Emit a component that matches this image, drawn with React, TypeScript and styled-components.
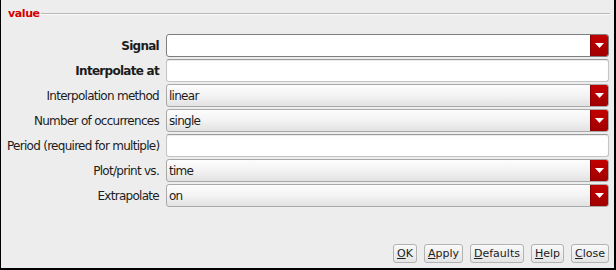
import React from 'react'
import styled, { createGlobalStyle } from 'styled-components'

const GlobalStyle = createGlobalStyle`
  html, body {
    margin: 0;
    padding: 0;
    background: #ededed;
  }
  body {
    font-family: "DejaVu Sans", sans-serif;
    font-size: 12px;
    letter-spacing: -0.72px;
    color: #1c1c1c;
  }
`

const Window = styled.div`
  width: 616px;
  height: 270px;
  box-sizing: border-box;
  border: 1px solid #000;
  border-top: none;
  border-right-width: 2px;
  border-bottom-width: 2px;
  background: #ededed;
  display: flex;
  flex-direction: column;
`

const Frame = styled.div`
  padding: 6px 4px 0 6px;
  flex: 1;
`

const LegendRow = styled.div`
  display: flex;
  align-items: center;
  gap: 1px;
  height: 14px;
`

const Legend = styled.span`
  color: #d40000;
  font-weight: bold;
  font-size: 11px;
  letter-spacing: -0.4px;
  padding-left: 1px;
`

const LegendLine = styled.div`
  flex: 1;
  height: 1px;
  margin-top: 1px;
  background: #b8b8b8;
  border-bottom: 1px solid #fafafa;
`

const Form = styled.div`
  display: grid;
  grid-template-columns: 152px 1fr;
  column-gap: 7px;
  row-gap: 2px;
  margin-top: 14px;
  padding-right: 1px;
`

const Label = styled.label<{ $bold?: boolean }>`
  text-align: right;
  align-self: center;
  font-weight: ${p => (p.$bold ? 'bold' : 'normal')};
  white-space: nowrap;
`

const TextField = styled.div`
  height: 23px;
  box-sizing: border-box;
  background: #fff;
  border: 1px solid #c4c4c4;
  border-top-color: #9a9a9a;
  border-radius: 3px;
  box-shadow: inset 0 1px 1px rgba(0, 0, 0, 0.08);
`

const Combo = styled.div<{ $outlined?: boolean }>`
  height: 23px;
  box-sizing: border-box;
  display: flex;
  align-items: stretch;
  border: 1px solid ${p => (p.$outlined ? '#7d7d7d' : '#a9a9a9')};
  border-radius: 3px;
  background: ${p =>
    p.$outlined ? '#fff' : 'linear-gradient(#fdfdfd, #f3f3f3 50%, #e2e2e2)'};
  overflow: hidden;
`

const ComboText = styled.span`
  flex: 1;
  display: flex;
  align-items: center;
  padding-left: 2px;
`

const Arrow = styled.span`
  width: 17px;
  display: flex;
  align-items: center;
  justify-content: center;
  background: linear-gradient(#c40000, #a00000);
  border-left: 1px solid #8a0000;
`

const ButtonBar = styled.div`
  display: flex;
  justify-content: flex-end;
  gap: 7px;
  padding: 0 5px 5px 0;
`

const Button = styled.button`
  font-family: inherit;
  font-size: 11px;
  letter-spacing: 0;
  color: #1c1c1c;
  height: 19px;
  padding: 0 3px;
  border: 1px solid #b3b3b3;
  border-radius: 3px;
  background: linear-gradient(#f9f9f9, #e4e4e4);
  u {
    text-decoration: underline;
  }
`

const DownArrow = () => (
  <svg width="9" height="5" viewBox="0 0 9 5">
    <path d="M0 0h9L4.5 5z" fill="#fff" />
  </svg>
)

type Row = {
  label: string
  bold?: boolean
  kind: 'text' | 'combo'
  value?: string
  outlined?: boolean
}

const rows: Row[] = [
  { label: 'Signal', bold: true, kind: 'combo', value: '', outlined: true },
  { label: 'Interpolate at', bold: true, kind: 'text' },
  { label: 'Interpolation method', kind: 'combo', value: 'linear' },
  { label: 'Number of occurrences', kind: 'combo', value: 'single' },
  { label: 'Period (required for multiple)', kind: 'text' },
  { label: 'Plot/print vs.', kind: 'combo', value: 'time' },
  { label: 'Extrapolate', kind: 'combo', value: 'on' },
]

const buttons = [
  ['O', 'K'],
  ['A', 'pply'],
  ['D', 'efaults'],
  ['H', 'elp'],
  ['C', 'lose'],
]

export default function App() {
  return (
    <>
      <GlobalStyle />
      <Window>
        <Frame>
          <LegendRow>
            <Legend>value</Legend>
            <LegendLine />
          </LegendRow>
          <Form>
            {rows.map(r => (
              <React.Fragment key={r.label}>
                <Label $bold={r.bold}>{r.label}</Label>
                {r.kind === 'text' ? (
                  <TextField />
                ) : (
                  <Combo $outlined={r.outlined}>
                    <ComboText>{r.value}</ComboText>
                    <Arrow>
                      <DownArrow />
                    </Arrow>
                  </Combo>
                )}
              </React.Fragment>
            ))}
          </Form>
        </Frame>
        <ButtonBar>
          {buttons.map(([u, rest]) => (
            <Button key={u + rest}>
              <u>{u}</u>
              {rest}
            </Button>
          ))}
        </ButtonBar>
      </Window>
    </>
  )
}
